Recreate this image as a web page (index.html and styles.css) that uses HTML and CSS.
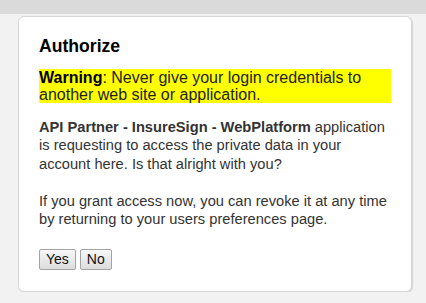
FILE: index.html
```html
<!DOCTYPE html>
<html lang="en">
<head>
    <meta charset="UTF-8">
    <meta name="viewport" content="width=device-width, initial-scale=1.0">
    <title>Authorize</title>
    <link rel="stylesheet" href="styles.css">
</head>
<body>
    <div class="top-bar"></div>

    <div class="page">
        <div class="auth-box">
            <h1>Authorize</h1>

            <div class="warning">
                <strong>Warning</strong>: Never give your login credentials to another web site or application.
            </div>

            <p><strong>API Partner - InsureSign - WebPlatform</strong> application is requesting to access the private data in your account here. Is that alright with you?</p>

            <p>If you grant access now, you can revoke it at any time by returning to your users preferences page.</p>

            <form class="actions">
                <button type="submit" class="btn">Yes</button>
                <button type="button" class="btn">No</button>
            </form>
        </div>
    </div>
</body>
</html>
```

FILE: styles.css
```css
* {
    margin: 0;
    padding: 0;
    box-sizing: border-box;
}

body {
    font-family: 'Liberation Sans', Arial, sans-serif;
    background: #f2f2f2;
    color: #333;
}

.top-bar {
    height: 14px;
    background: #dadada;
}

.page {
    padding: 2px 14px 0 18px;
}

.auth-box {
    background: #fff;
    border: 1px solid #d6d6d6;
    border-radius: 6px;
    box-shadow: 1px 1px 1px rgba(0, 0, 0, 0.12);
    padding: 19px 20px 21px 20px;
}

.auth-box h1 {
    font-size: 17.6px;
    line-height: 20px;
    font-weight: bold;
    color: #000;
    margin-bottom: 13px;
}

.warning {
    background: #ffff00;
    color: #222;
    font-size: 16px;
    line-height: 17px;
    margin-bottom: 15px;
}

.warning strong {
    color: #000;
}

.auth-box p {
    font-size: 14.67px;
    line-height: 18.4px;
    margin-bottom: 18.4px;
}

.actions {
    display: flex;
    gap: 4px;
    padding-top: 2px;
}

.btn {
    font-family: 'Liberation Sans', Arial, sans-serif;
    font-size: 14px;
    line-height: 17px;
    color: #111;
    padding: 1px 6px;
    height: 21px;
    border: 1px solid #a3a3a3;
    border-radius: 2px;
    background: linear-gradient(#f7f7f7, #dddddd);
    cursor: pointer;
}

.btn:hover {
    background: linear-gradient(#fdfdfd, #e6e6e6);
}
```
